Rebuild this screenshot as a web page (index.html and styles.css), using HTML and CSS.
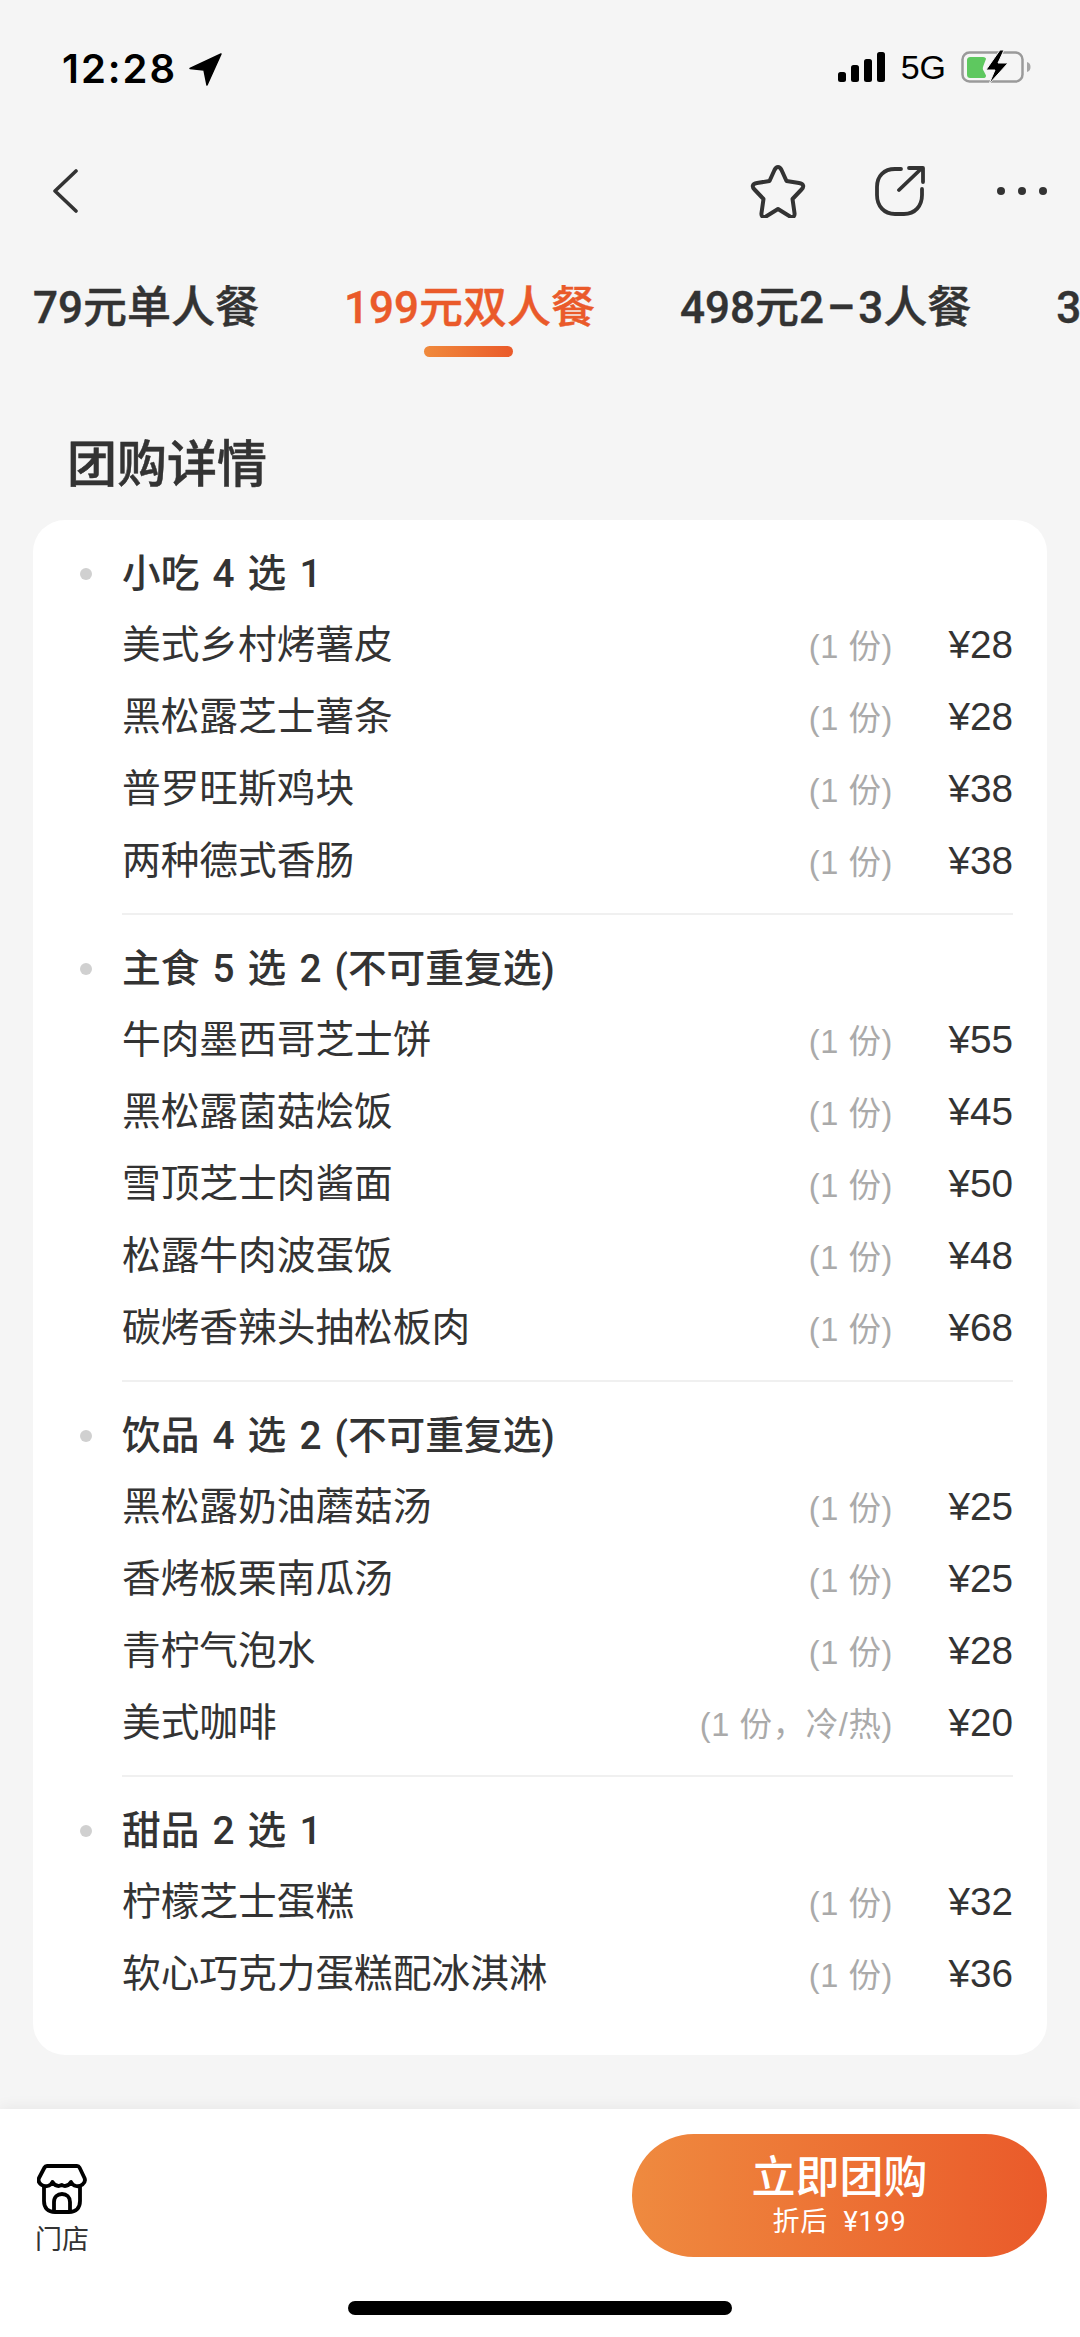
FILE: index.html
```html
<!DOCTYPE html>
<html lang="zh">
<head>
<meta charset="utf-8">
<title>团购详情</title>
<link rel="stylesheet" href="styles.css">
</head>
<body>
<div class="page">
  <div class="status">
    <div class="status-left">
      <span class="time">12:28</span>
      <svg class="loc" viewBox="0 0 33 33"><path d="M32 1 1 15.500 15 17 18 32Z" fill="#000" stroke="#000" stroke-width="1.500" stroke-linejoin="round"/></svg>
    </div>
    <div class="status-right">
      <svg class="signal" viewBox="0 0 47 30"><rect x="0" y="20" width="8" height="10" rx="2.500"/><rect x="13" y="13" width="8" height="17" rx="2.500"/><rect x="26" y="7" width="8" height="23" rx="2.500"/><rect x="39" y="0" width="8" height="30" rx="2.500"/></svg>
      <span class="net">5G</span>
      <svg class="battery" viewBox="0 0 70 34"><rect x="1.500" y="2.500" width="60" height="29" rx="7" fill="none" stroke="#9a9a9a" stroke-width="2.500"/><path d="M66 12c2.500.5 3.500 2.500 3.500 5s-1 4.500-3.500 5z" fill="#a5a5a5"/><path d="M10 7h12c2 0 3 1 3 2l-2.500 6.500c-1 2.500-1 4 .5 6l2 4c0 2-1 2.500-3 2.500H10c-3 0-4-1-4-4V11c0-3 1-4 4-4z" fill="#5ec85f"/><path d="M39 0 25 20h9l-6 14 19-21H37l6-13z" fill="#000" stroke="#f5f5f5" stroke-width="1"/></svg>
    </div>
  </div>

  <div class="nav">
    <svg class="back" viewBox="0 0 26 44"><path d="M24 2 3 22l21 20" fill="none" stroke="#333" stroke-width="3.600" stroke-linejoin="round" stroke-linecap="round"/></svg>
    <div class="nav-actions">
      <svg class="star" viewBox="0 0 56 54"><path d="M28 3c1.500 0 2.500 1 3.500 3l5 11 12.500 2c4.500.7 5.500 3.500 2.500 6.500l-9 9.500 2 14c.5 3.500-1.500 5-4.500 3.500L28 45l-12 7.500c-3 1.500-5 0-4.500-3.500l2-14-9-9.500c-3-3-2-5.800 2.500-6.500l12.500-2 5-11c1-2 2-3 3.500-3z" fill="none" stroke="#333" stroke-width="4" stroke-linejoin="round"/></svg>
      <svg class="share" viewBox="0 0 50 50"><path d="M26 3h-6C9 3 2 10 2 21v8c0 11 7 19 18 19h9c11 0 18-8 18-19v-6" fill="none" stroke="#333" stroke-width="3.800" stroke-linecap="round"/><path d="M24 24 47 2M34 2h14v14" fill="none" stroke="#333" stroke-width="3.800" stroke-linecap="round" stroke-linejoin="round"/></svg>
      <div class="dots"><i></i><i></i><i></i></div>
    </div>
  </div>

  <div class="tabs">
    <div class="tab">79元单人餐</div>
    <div class="tab active">199元双人餐</div>
    <div class="tab">498元2<span class="dash">–</span>3人餐</div>
    <div class="tab">3</div>
  </div>

  <h1 class="title">团购详情</h1>

  <div class="card">
    <section class="group">
      <span class="bullet"></span>
      <div class="group-body">
        <h2 class="group-head">小吃 4 选 1</h2>
        <div class="row"><span class="name">美式乡村烤薯皮</span><span class="qty">(1 份)</span><span class="price">¥28</span></div>
        <div class="row"><span class="name">黑松露芝士薯条</span><span class="qty">(1 份)</span><span class="price">¥28</span></div>
        <div class="row"><span class="name">普罗旺斯鸡块</span><span class="qty">(1 份)</span><span class="price">¥38</span></div>
        <div class="row"><span class="name">两种德式香肠</span><span class="qty">(1 份)</span><span class="price">¥38</span></div>
      </div>
    </section>
    <section class="group">
      <span class="bullet"></span>
      <div class="group-body">
        <h2 class="group-head">主食 5 选 2 (不可重复选)</h2>
        <div class="row"><span class="name">牛肉墨西哥芝士饼</span><span class="qty">(1 份)</span><span class="price">¥55</span></div>
        <div class="row"><span class="name">黑松露菌菇烩饭</span><span class="qty">(1 份)</span><span class="price">¥45</span></div>
        <div class="row"><span class="name">雪顶芝士肉酱面</span><span class="qty">(1 份)</span><span class="price">¥50</span></div>
        <div class="row"><span class="name">松露牛肉波蛋饭</span><span class="qty">(1 份)</span><span class="price">¥48</span></div>
        <div class="row"><span class="name">碳烤香辣头抽松板肉</span><span class="qty">(1 份)</span><span class="price">¥68</span></div>
      </div>
    </section>
    <section class="group">
      <span class="bullet"></span>
      <div class="group-body">
        <h2 class="group-head">饮品 4 选 2 (不可重复选)</h2>
        <div class="row"><span class="name">黑松露奶油蘑菇汤</span><span class="qty">(1 份)</span><span class="price">¥25</span></div>
        <div class="row"><span class="name">香烤板栗南瓜汤</span><span class="qty">(1 份)</span><span class="price">¥25</span></div>
        <div class="row"><span class="name">青柠气泡水</span><span class="qty">(1 份)</span><span class="price">¥28</span></div>
        <div class="row"><span class="name">美式咖啡</span><span class="qty">(1 份，冷/热)</span><span class="price">¥20</span></div>
      </div>
    </section>
    <section class="group last">
      <span class="bullet"></span>
      <div class="group-body">
        <h2 class="group-head">甜品 2 选 1</h2>
        <div class="row"><span class="name">柠檬芝士蛋糕</span><span class="qty">(1 份)</span><span class="price">¥32</span></div>
        <div class="row"><span class="name">软心巧克力蛋糕配冰淇淋</span><span class="qty">(1 份)</span><span class="price">¥36</span></div>
      </div>
    </section>
  </div>

  <div class="bar">
    <div class="bar-main">
      <div class="shop">
        <svg class="shop-icon" viewBox="0 0 50 50"><path d="M10 2h30c1 0 2 .5 2.500 1.500L47.500 14c1 2.500 0 5-2 6.500-1.500 1.200-4.500 2-6.500 1.500-2-.4-4-1.800-5-4-1.500 2.500-3.500 4-6 4-1.500 0-3-1-3-1-1 0-2.500 1-3.500 1-2.500 0-4.500-1.500-6-4-1 2.200-3 3.600-5 4-2 .5-5-.3-6.500-1.500-2-1.500-3-4-2-6.500L7.500 3.500C8 2.500 9 2 10 2z" fill="none" stroke="#000" stroke-width="3.800" stroke-linejoin="round"/><path d="M7 22v15c0 7 4 11 11 11h14c7 0 11-4 11-11V22" fill="none" stroke="#000" stroke-width="3.800"/><path d="M17 47V38c0-5 3.500-8 8-8s8 3 8 8v9" fill="none" stroke="#000" stroke-width="3.800"/></svg>
        <span class="shop-label">门店</span>
      </div>
      <div class="buy">
        <span class="buy-title">立即团购</span>
        <span class="buy-sub">折后 ¥199</span>
      </div>
    </div>
    <div class="home"></div>
  </div>
</div>
</body>
</html>
```
FILE: styles.css
```css
* { box-sizing: border-box; }
html, body { margin: 0; padding: 0; }
body {
  font-family: "Liberation Sans", "Noto Sans CJK SC", sans-serif;
  color: #333;
}
.page {
  width: 1080px;
  height: 2337px;
  background: #f5f5f5;
  display: flex;
  flex-direction: column;
  overflow: hidden;
}
.status {
  height: 136px;
  padding: 50px 49px 0 62px;
  display: flex;
  justify-content: space-between;
  align-items: flex-start;
}
.status-left { display: flex; align-items: center; gap: 12px; height: 38px; }
.time {
  font-family: Inter, sans-serif;
  font-weight: 600;
  font-size: 40px;
  line-height: 38px;
  letter-spacing: 2px;
  color: #000;
}
.loc { width: 33px; height: 33px; }
.status-right { display: flex; align-items: center; height: 34px; }
.signal { width: 47px; height: 30px; fill: #000; }
.net {
  font-size: 34px;
  line-height: 34px;
  color: #000;
  margin-left: 16px;
  margin-right: 15px;
}
.battery { width: 70px; height: 34px; }
.nav {
  height: 110px;
  padding: 0 33px 0 52px;
  display: flex;
  justify-content: space-between;
  align-items: center;
}
.back { width: 26px; height: 44px; }
.nav-actions { display: flex; align-items: center; }
.star { width: 56px; height: 54px; }
.share { width: 50px; height: 50px; margin-left: 69px; }
.dots { display: flex; gap: 13px; margin-left: 72px; }
.dots i { width: 8px; height: 8px; border-radius: 50%; background: #333; display: block; }
.tabs {
  height: 133px;
  padding: 35px 0 0 33px;
  display: flex;
  gap: 85px;
  white-space: nowrap;
  overflow: hidden;
  font-family: Roboto, "Noto Sans CJK SC", sans-serif;
}
.tab {
  position: relative;
  font-size: 44px;
  line-height: 54px;
  height: 54px;
  font-weight: 500;
  -webkit-text-stroke: .4px currentColor;
  color: #333;
}
.dash { margin: 0 3px; }
.tab.active { color: #ea5a2a; }
.tab.active::after {
  content: "";
  position: absolute;
  left: 80px;
  top: 65px;
  width: 89px;
  height: 11px;
  border-radius: 6px;
  background: linear-gradient(90deg, #f08a3c, #ea5a2a);
}
.title {
  margin: 0;
  height: 141px;
  padding: 49px 0 0 67px;
  font-size: 50px;
  line-height: 64px;
  font-weight: 500;
  -webkit-text-stroke: .5px currentColor;
  font-family: "Noto Sans CJK SC", sans-serif;
  color: #333;
}
.card {
  margin: 0 33px;
  height: 1535px;
  padding: 0 34px 46px 47px;
  background: #fff;
  border-radius: 32px;
  flex: none;
}
.group { display: flex; }
.bullet {
  flex: none;
  width: 12px;
  height: 12px;
  margin: 48px 30px 0 0;
  border-radius: 50%;
  background: #d0d0d0;
}
.group-body {
  flex: 1;
  padding: 19px 0 14px;
  border-bottom: 2px solid #f0f0f0;
}
.group.last .group-body { border-bottom: 0; }
.group-head {
  margin: 0;
  font-family: Roboto, "Noto Sans CJK SC", sans-serif;
  font-size: 38.700px;
  line-height: 70px;
  height: 72px;
  font-weight: 500;
  word-spacing: 3.500px;
  color: #333;
}
.row {
  display: flex;
  align-items: baseline;
  height: 72px;
  line-height: 68px;
  font-size: 38.700px;
}
.name { flex: 1; color: #333; }
.qty { font-size: 32.500px; letter-spacing: .6px; color: #aaa; }
.price { width: 120px; text-align: right; color: #333; }
.bar {
  margin-top: auto;
  height: 228px;
  background: #fff;
  box-shadow: 0 -2px 14px rgba(0, 0, 0, .06);
  display: flex;
  flex-direction: column;
}
.bar-main {
  height: 192px;
  padding: 25px 33px 0 35px;
  display: flex;
  justify-content: space-between;
  align-items: flex-start;
}
.shop {
  display: flex;
  flex-direction: column;
  align-items: center;
  padding-top: 30px;
}
.shop-icon { width: 50px; height: 50px; }
.shop-label { font-size: 27px; line-height: 36px; margin-top: 8px; color: #333; }
.buy {
  width: 415px;
  height: 123px;
  border-radius: 62px;
  background: linear-gradient(90deg, #ef8a3f, #ea5a2a);
  color: #fff;
  display: flex;
  flex-direction: column;
  align-items: center;
  padding-top: 18px;
  font-family: Roboto, "Noto Sans CJK SC", sans-serif;
}
.buy-title { font-size: 44px; line-height: 52px; font-weight: 500; }
.buy-sub { font-size: 27px; line-height: 37px; word-spacing: 8px; letter-spacing: .8px; }
.home {
  width: 384px;
  height: 14px;
  margin: 0 auto;
  border-radius: 7px;
  background: #000;
}
```
